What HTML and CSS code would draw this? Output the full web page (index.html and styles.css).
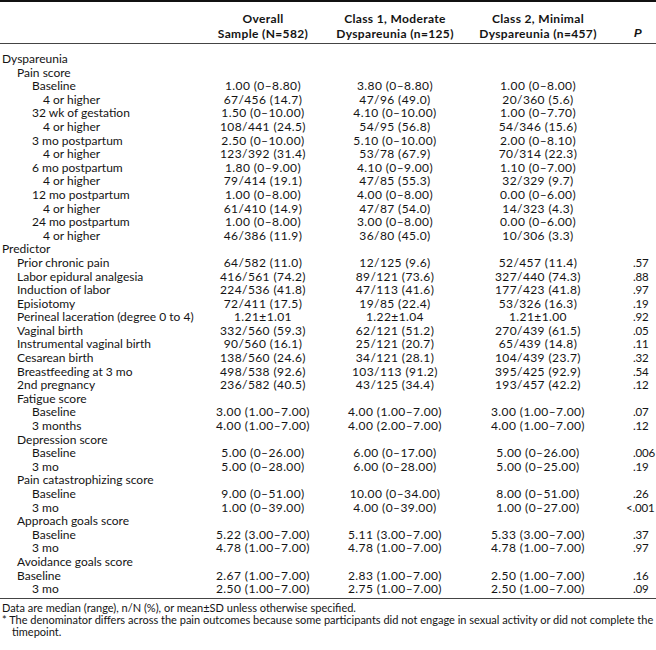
FILE: index.html
```html
<!DOCTYPE html>
<html>
<head>
<meta charset="utf-8">
<link rel="stylesheet" href="styles.css">
</head>
<body>
<table class="tbl">
<colgroup><col class="c-label"><col class="c-a"><col class="c-b"><col class="c-c"><col class="c-p"></colgroup>
<thead>
<tr>
<th class="hl"></th>
<th>Overall<br>Sample (N=582)</th>
<th>Class 1, Moderate<br>Dyspareunia (n=125)</th>
<th>Class 2, Minimal<br>Dyspareunia (n=457)</th>
<th class="hp"><i>P</i></th>
</tr>
</thead>
<tbody>
<tr><td class="l0">Dyspareunia</td><td></td><td></td><td></td><td></td></tr>
<tr><td class="l1">Pain score</td><td></td><td></td><td></td><td></td></tr>
<tr><td class="l2">Baseline</td><td>1.00 (0–8.80)</td><td>3.80 (0–8.80)</td><td>1.00 (0–8.00)</td><td></td></tr>
<tr><td class="l3">4 or higher</td><td>67/456 (14.7)</td><td>47/96 (49.0)</td><td>20/360 (5.6)</td><td></td></tr>
<tr><td class="l2">32 wk of gestation</td><td>1.50 (0–10.00)</td><td>4.10 (0–10.00)</td><td>1.00 (0–7.70)</td><td></td></tr>
<tr><td class="l3">4 or higher</td><td>108/441 (24.5)</td><td>54/95 (56.8)</td><td>54/346 (15.6)</td><td></td></tr>
<tr><td class="l2">3 mo postpartum</td><td>2.50 (0–10.00)</td><td>5.10 (0–10.00)</td><td>2.00 (0–8.10)</td><td></td></tr>
<tr><td class="l3">4 or higher</td><td>123/392 (31.4)</td><td>53/78 (67.9)</td><td>70/314 (22.3)</td><td></td></tr>
<tr><td class="l2">6 mo postpartum</td><td>1.80 (0–9.00)</td><td>4.10 (0–9.00)</td><td>1.10 (0–7.00)</td><td></td></tr>
<tr><td class="l3">4 or higher</td><td>79/414 (19.1)</td><td>47/85 (55.3)</td><td>32/329 (9.7)</td><td></td></tr>
<tr><td class="l2">12 mo postpartum</td><td>1.00 (0–8.00)</td><td>4.00 (0–8.00)</td><td>0.00 (0–6.00)</td><td></td></tr>
<tr><td class="l3">4 or higher</td><td>61/410 (14.9)</td><td>47/87 (54.0)</td><td>14/323 (4.3)</td><td></td></tr>
<tr><td class="l2">24 mo postpartum</td><td>1.00 (0–8.00)</td><td>3.00 (0–8.00)</td><td>0.00 (0–6.00)</td><td></td></tr>
<tr><td class="l3">4 or higher</td><td>46/386 (11.9)</td><td>36/80 (45.0)</td><td>10/306 (3.3)</td><td></td></tr>
<tr><td class="l0">Predictor</td><td></td><td></td><td></td><td></td></tr>
<tr><td class="l1">Prior chronic pain</td><td>64/582 (11.0)</td><td>12/125 (9.6)</td><td>52/457 (11.4)</td><td>.57</td></tr>
<tr><td class="l1">Labor epidural analgesia</td><td>416/561 (74.2)</td><td>89/121 (73.6)</td><td>327/440 (74.3)</td><td>.88</td></tr>
<tr><td class="l1">Induction of labor</td><td>224/536 (41.8)</td><td>47/113 (41.6)</td><td>177/423 (41.8)</td><td>.97</td></tr>
<tr><td class="l1">Episiotomy</td><td>72/411 (17.5)</td><td>19/85 (22.4)</td><td>53/326 (16.3)</td><td>.19</td></tr>
<tr><td class="l1">Perineal laceration (degree 0 to 4)</td><td>1.21±1.01</td><td>1.22±1.04</td><td>1.21±1.00</td><td>.92</td></tr>
<tr><td class="l1">Vaginal birth</td><td>332/560 (59.3)</td><td>62/121 (51.2)</td><td>270/439 (61.5)</td><td>.05</td></tr>
<tr><td class="l1">Instrumental vaginal birth</td><td>90/560 (16.1)</td><td>25/121 (20.7)</td><td>65/439 (14.8)</td><td>.11</td></tr>
<tr><td class="l1">Cesarean birth</td><td>138/560 (24.6)</td><td>34/121 (28.1)</td><td>104/439 (23.7)</td><td>.32</td></tr>
<tr><td class="l1">Breastfeeding at 3 mo</td><td>498/538 (92.6)</td><td>103/113 (91.2)</td><td>395/425 (92.9)</td><td>.54</td></tr>
<tr><td class="l1">2nd pregnancy</td><td>236/582 (40.5)</td><td>43/125 (34.4)</td><td>193/457 (42.2)</td><td>.12</td></tr>
<tr><td class="l1">Fatigue score</td><td></td><td></td><td></td><td></td></tr>
<tr><td class="l2">Baseline</td><td>3.00 (1.00–7.00)</td><td>4.00 (1.00–7.00)</td><td>3.00 (1.00–7.00)</td><td>.07</td></tr>
<tr><td class="l2">3 months</td><td>4.00 (1.00–7.00)</td><td>4.00 (2.00–7.00)</td><td>4.00 (1.00–7.00)</td><td>.12</td></tr>
<tr><td class="l1">Depression score</td><td></td><td></td><td></td><td></td></tr>
<tr><td class="l2">Baseline</td><td>5.00 (0–26.00)</td><td>6.00 (0–17.00)</td><td>5.00 (0–26.00)</td><td>.006</td></tr>
<tr><td class="l2">3 mo</td><td>5.00 (0–28.00)</td><td>6.00 (0–28.00)</td><td>5.00 (0–25.00)</td><td>.19</td></tr>
<tr><td class="l1">Pain catastrophizing score</td><td></td><td></td><td></td><td></td></tr>
<tr><td class="l2">Baseline</td><td>9.00 (0–51.00)</td><td>10.00 (0–34.00)</td><td>8.00 (0–51.00)</td><td>.26</td></tr>
<tr><td class="l2">3 mo</td><td>1.00 (0–39.00)</td><td>4.00 (0–39.00)</td><td>1.00 (0–27.00)</td><td><span class="lt">&lt;</span>.001</td></tr>
<tr><td class="l1">Approach goals score</td><td></td><td></td><td></td><td></td></tr>
<tr><td class="l2">Baseline</td><td>5.22 (3.00–7.00)</td><td>5.11 (3.00–7.00)</td><td>5.33 (3.00–7.00)</td><td>.37</td></tr>
<tr><td class="l2">3 mo</td><td>4.78 (1.00–7.00)</td><td>4.78 (1.00–7.00)</td><td>4.78 (1.00–7.00)</td><td>.97</td></tr>
<tr><td class="l1">Avoidance goals score</td><td></td><td></td><td></td><td></td></tr>
<tr><td class="l1">Baseline</td><td>2.67 (1.00–7.00)</td><td>2.83 (1.00–7.00)</td><td>2.50 (1.00–7.00)</td><td>.16</td></tr>
<tr><td class="l2">3 mo</td><td>2.50 (1.00–7.00)</td><td>2.75 (1.00–7.00)</td><td>2.50 (1.00–7.00)</td><td>.09</td></tr>
</tbody>
</table>
<div class="notes">
<p class="note">Data are median (range), n/N (%), or mean±SD unless otherwise specified.</p>
<p class="note fn">* The denominator differs across the pain outcomes because some participants did not engage in sexual activity or did not complete the timepoint.</p>
</div>
</body>
</html>
```
FILE: styles.css
```css
html, body {
  margin: 0;
  padding: 0;
  background: #fff;
}
body {
  width: 656px;
  font-family: "Lato", "Liberation Sans", sans-serif;
  color: #141414;
}
.tbl {
  width: 656px;
  border-collapse: collapse;
  table-layout: fixed;
  font-size: 12px;
}
.c-label { width: 198px; }
.c-a { width: 130px; }
.c-b { width: 134px; }
.c-c { width: 152px; }
.c-p { width: 42px; }
.tbl thead tr {
  border-top: 2px solid #111;
  border-bottom: 1.5px solid #444;
}
.tbl th {
  font-weight: 700;
  line-height: 15px;
  padding: 9px 0 2px;
  text-align: center;
  vertical-align: bottom;
  white-space: nowrap;
  letter-spacing: 0.35px;
}
.tbl th.hp {
  text-align: left;
  padding-left: 20px;
}
.tbl th.hp i {
  font-family: "Liberation Sans", sans-serif;
  font-style: italic;
  font-weight: 700;
  font-size: 11.5px;
}
.tbl tbody tr:last-child {
  border-bottom: 1.5px solid #444;
}
.tbl td {
  padding: 0;
  line-height: 13.6px;
  text-align: center;
  white-space: nowrap;
  letter-spacing: 0.4px;
}
.tbl tbody tr:first-child td { padding-top: 8px; }
.tbl tbody tr:last-child td { padding-bottom: 2px; }
.tbl td:first-child {
  text-align: left;
  letter-spacing: 0;
}
.tbl td:last-child {
  text-align: left;
  padding-left: 19px;
  font-size: 11.5px;
  letter-spacing: -0.2px;
}
.l0 { padding-left: 2px !important; }
.l1 { padding-left: 17px !important; }
.l2 { padding-left: 32px !important; }
.l3 { padding-left: 43px !important; }
.lt { margin-left: -7px; }
.notes {
  padding: 3px 2px 0;
  font-size: 11px;
  line-height: 12px;
}
.note { margin: 0; }
.fn {
  padding-left: 10px;
  text-indent: -10px;
}
```
